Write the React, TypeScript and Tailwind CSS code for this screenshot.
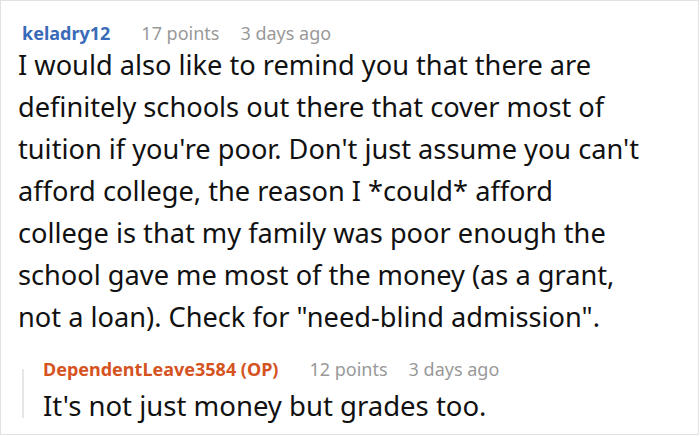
import React from 'react';

const Meta = ({ name, color, points, ago }: { name: string; color: string; points: string; ago: string }) => (
  <div className="flex items-baseline text-[18px] leading-[24px]">
    <span className={`font-bold ${color}`}>{name}</span>
    <span className="ml-[31px] text-[#999999]">{points}</span>
    <span className="ml-[21px] text-[#999999]">{ago}</span>
  </div>
);

// the comment body keeps the line breaks of the original card
const body = [
  'I would also like to remind you that there are',
  'definitely schools out there that cover most of',
  "tuition if you're poor. Don't just assume you can't",
  'afford college, the reason I *could* afford',
  'college is that my family was poor enough the',
  'school gave me most of the money (as a grant,',
  'not a loan). Check for "need-blind admission".',
];

const App = () => {
  return (
    <div className="w-[700px] h-[436px] bg-white" style={{ fontFamily: '"Noto Sans", "Open Sans", sans-serif' }}>
      <div className="w-[699px] h-[435px] border border-[#e2e2e2] pl-[21px] pt-[20px]">
        <Meta name="keladry12" color="text-[#3a6bb8]" points="17 points" ago="3 days ago" />

        <div className="-mt-[1px] -ml-[4px] text-[27.2px] leading-[42px] text-[#111111]">
          {body.map((line) => (
            <p key={line} className="whitespace-nowrap">{line}</p>
          ))}
        </div>

        <div className="mt-[19px] flex">
          <div className="w-[2px] mt-[12px] h-[49px] bg-[#e6e6e6]" />
          <div className="ml-[19px]">
            <Meta name="DependentLeave3584 (OP)" color="text-[#d5531f]" points="12 points" ago="3 days ago" />
            <p className="mt-[5px] text-[27.5px] leading-[40px] text-[#111111]">It's not just money but grades too.</p>
          </div>
        </div>
      </div>
    </div>
  );
};

export default App;
